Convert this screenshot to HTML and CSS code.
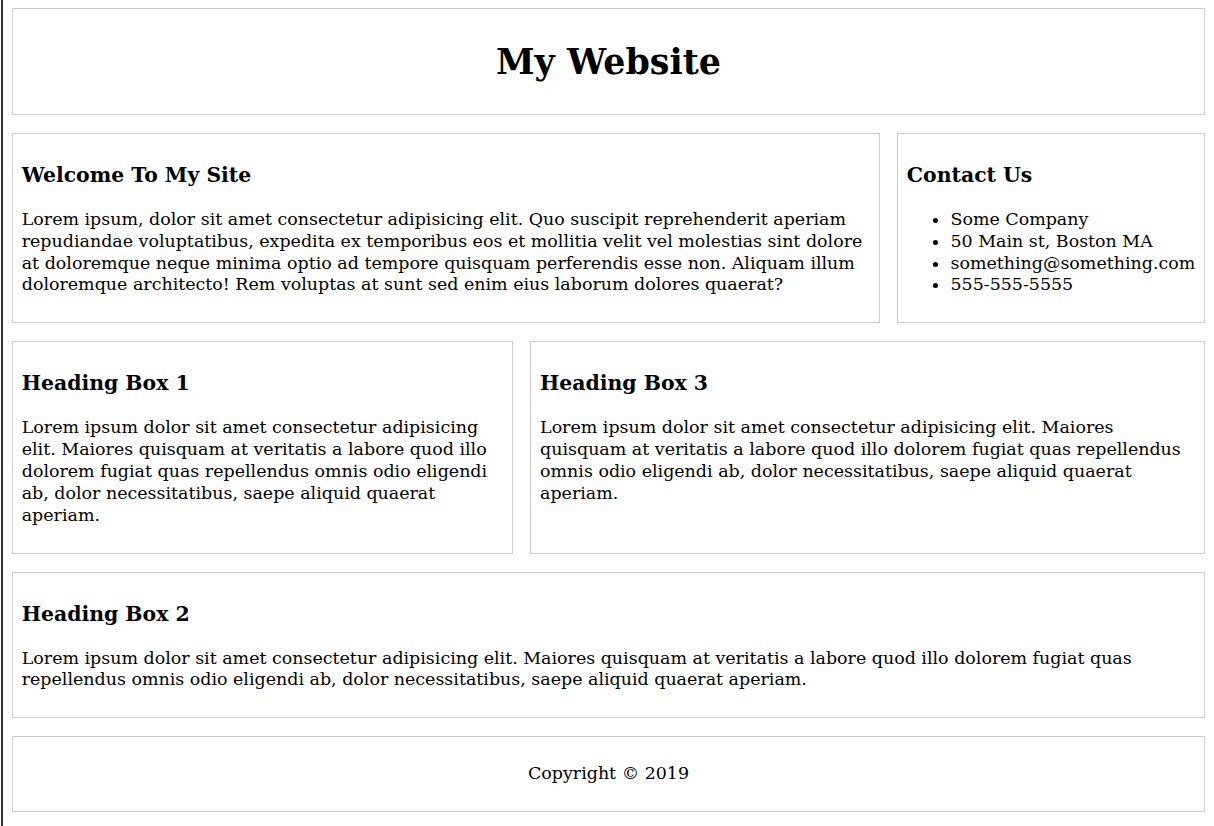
FILE: index.html
```html
<!DOCTYPE html>
<html lang="en">
<head>
<meta charset="utf-8">
<title>My Website</title>
<link rel="stylesheet" href="styles.css">
</head>
<body>
<div class="page">
  <header class="box header">
    <h1>My Website</h1>
  </header>
  <div class="row row-top">
    <section class="box">
      <h3>Welcome To My Site</h3>
      <p>Lorem ipsum, dolor sit amet consectetur adipisicing elit. Quo suscipit reprehenderit aperiam repudiandae voluptatibus, expedita ex temporibus eos et mollitia velit vel molestias sint dolore at doloremque neque minima optio ad tempore quisquam perferendis esse non. Aliquam illum doloremque architecto! Rem voluptas at sunt sed enim eius laborum dolores quaerat?</p>
    </section>
    <aside class="box">
      <h3>Contact Us</h3>
      <ul>
        <li>Some Company</li>
        <li>50 Main st, Boston MA</li>
        <li>something@something.com</li>
        <li>555-555-5555</li>
      </ul>
    </aside>
  </div>
  <div class="row row-mid">
    <section class="box">
      <h3>Heading Box 1</h3>
      <p>Lorem ipsum dolor sit amet consectetur adipisicing elit. Maiores quisquam at veritatis a labore quod illo dolorem fugiat quas repellendus omnis odio eligendi ab, dolor necessitatibus, saepe aliquid quaerat aperiam.</p>
    </section>
    <section class="box">
      <h3>Heading Box 3</h3>
      <p>Lorem ipsum dolor sit amet consectetur adipisicing elit. Maiores quisquam at veritatis a labore quod illo dolorem fugiat quas repellendus omnis odio eligendi ab, dolor necessitatibus, saepe aliquid quaerat aperiam.</p>
    </section>
  </div>
  <section class="box">
    <h3>Heading Box 2</h3>
    <p>Lorem ipsum dolor sit amet consectetur adipisicing elit. Maiores quisquam at veritatis a labore quod illo dolorem fugiat quas repellendus omnis odio eligendi ab, dolor necessitatibus, saepe aliquid quaerat aperiam.</p>
  </section>
  <footer class="box footer">
    <p>Copyright &copy; 2019</p>
  </footer>
</div>
</body>
</html>
```
FILE: styles.css
```css
html {
  margin-left: 1px;
  border-left: 2px solid #333;
  min-height: 100%;
  background: #fff;
  font-size: 109%;
}
body {
  margin: 8px 9px;
  font-family: "DejaVu Serif", serif;
  font-size: 1rem;
  line-height: 1.25;
  color: #000;
}
.page {
  display: flex;
  flex-direction: column;
  gap: 18px;
}
.row {
  display: grid;
  gap: 17.6px;
}
.row-top {
  grid-template-columns: 868fr 308fr;
}
.row-mid {
  grid-template-columns: 501fr 675fr;
}
.box {
  border: 1px solid #ccc;
  padding: 0.5rem;
  min-width: 0;
}
.box h3 {
  font-size: 1.17em;
  margin: 1em 0;
}
.box p {
  margin: 1em 0;
}
.box ul {
  margin: 1em 0;
  padding-left: 2.5rem;
}
.header {
  text-align: center;
}
.header h1 {
  font-size: 2em;
  margin: 22px 0;
}
.footer {
  text-align: center;
}
```
